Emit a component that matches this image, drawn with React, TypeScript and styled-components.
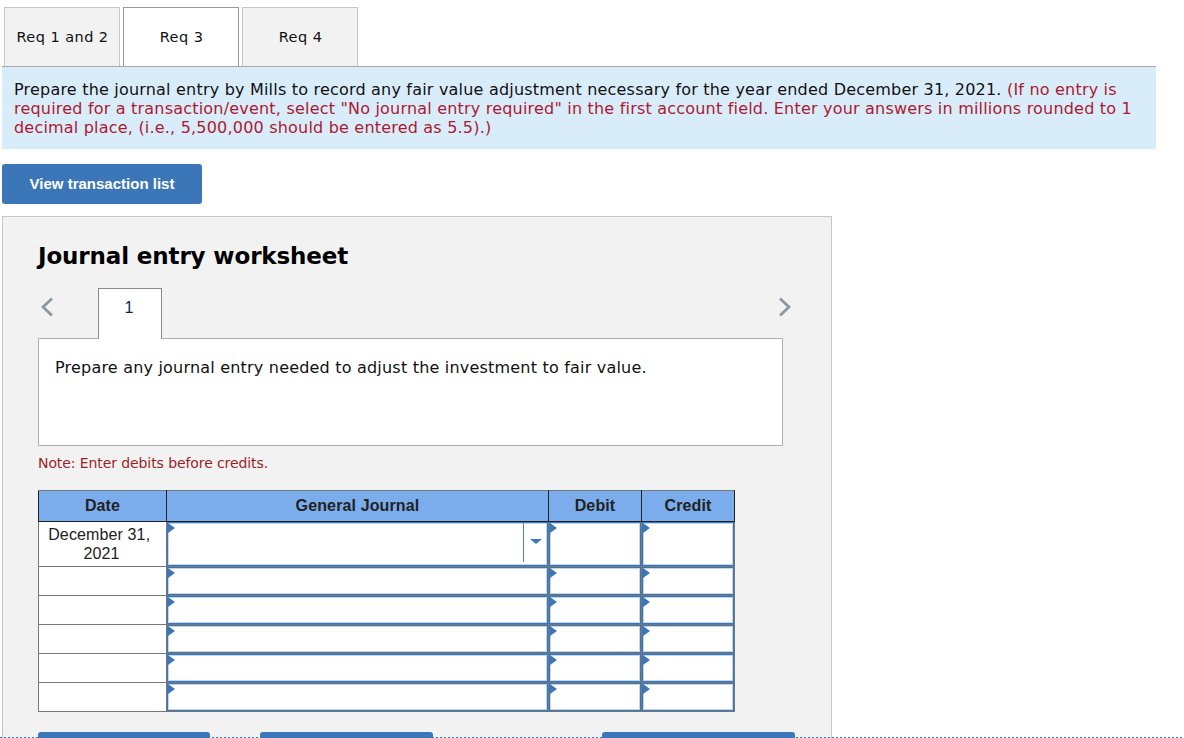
import React from "react";
import styled, { createGlobalStyle } from "styled-components";

const Global = createGlobalStyle`
  html, body { margin: 0; padding: 0; background: #fff; }
  body { font-family: "DejaVu Sans", Verdana, sans-serif; color: #111; overflow: hidden; }
`;

const Page = styled.div`
  position: relative;
  width: 1184px;
  height: 738px;
  overflow: hidden;
`;
const Content = styled.div`
  width: 1154px;
  padding: 7px 0 0 2px;
`;
const TabBar = styled.div`
  display: flex;
  gap: 3px;
  padding-left: 2px;
  height: 60px;
`;
const Tab = styled.div<{ $active?: boolean }>`
  width: 116px;
  box-sizing: border-box;
  height: 60px;
  display: flex;
  align-items: center;
  justify-content: center;
  padding: 0 0 2px 1px;
  font-size: 14.5px;
  letter-spacing: 0.45px;
  background: ${(p) => (p.$active ? "#fff" : "#f2f2f2")};
  border: 1px solid ${(p) => (p.$active ? "#999" : "#c6c6c6")};
  border-bottom: 0;
`;
const Instructions = styled.div`
  position: relative;
  box-sizing: border-box;
  height: 83px;
  margin-top: -1px;
  background: #d9ecfa;
  border-top: 1px solid #a8a8a8;
  padding: 13px 12px 0;
  font-size: 16px;
  line-height: 19px;
  letter-spacing: 0.2px;
`;
const Hint = styled.span`
  color: #ac1a2f;
`;
const ListButton = styled.button`
  display: block;
  width: 200px;
  height: 40px;
  margin: 15px 0 12px;
  padding: 0 6px 2px;
  border: 0;
  border-radius: 3px;
  background: #3b76b8;
  color: #fff;
  font: bold 15px "Liberation Sans", sans-serif;
`;
const Panel = styled.section`
  box-sizing: border-box;
  width: 830px;
  height: 560px;
  background: #f2f2f2;
  border: 1px solid #c6c6c6;
  padding: 23px 35px 0;
`;
const Heading = styled.h2`
  margin: 0;
  font-size: 23px;
  line-height: 32px;
  font-weight: bold;
  letter-spacing: -0.13px;
  color: #000;
`;
const Stepper = styled.div`
  display: flex;
  align-items: flex-start;
  width: 745px;
  height: 50px;
  margin-top: 16px;
`;
const Arrow = styled.svg`
  width: 14px;
  height: 20px;
  margin-top: 9px;
  margin-left: 2px;
  flex: none;
`;
const StepTab = styled.div`
  box-sizing: border-box;
  width: 64px;
  height: 51px;
  margin-left: 44px;
  margin-right: auto;
  background: #fff;
  border: 1px solid #8a8a8a;
  border-bottom: 0;
  position: relative;
  z-index: 1;
  padding: 9px 2px 0 0;
  text-align: center;
  font: 16px/19px "Liberation Sans", sans-serif;
  color: #0b1f63;
`;
const NextArrow = styled(Arrow)`
  margin-right: -9px;
`;
const Prompt = styled.div`
  box-sizing: border-box;
  width: 745px;
  height: 108px;
  background: #fff;
  border: 1px solid #b0b0b0;
  padding: 19px 16px 0;
  font-size: 16px;
  line-height: 19px;
  letter-spacing: 0.2px;
`;
const Note = styled.p`
  margin: 8px 0 18px;
  font-size: 14px;
  line-height: 18px;
  letter-spacing: -0.09px;
  color: #9c1f28;
`;
const Table = styled.table`
  width: 697px;
  border-collapse: collapse;
  table-layout: fixed;
  font-family: "Liberation Sans", Arial, sans-serif;
  font-size: 16px;
  letter-spacing: 0.13px;
`;
const Th = styled.th<{ $w: number }>`
  box-sizing: border-box;
  width: ${(p) => p.$w}px;
  height: 31px;
  padding: 0 0 1px;
  background: #7badec;
  border: 1px solid #222;
  border-top-color: #777;
  font-weight: bold;
  color: #222;
`;
const DateCell = styled.td`
  padding: 2px 6px 3px 4px;
  text-align: center;
  line-height: 19px;
  background: #fff;
  border: 1px solid #777;
  color: #222;
`;
const Row = styled.tr<{ $tall?: boolean }>`
  height: ${(p) => (p.$tall ? 45 : 29)}px;
`;
const EntryCell = styled.td`
  padding: 0;
  background: #fff;
  border: 1px solid #777;
  position: relative;
`;
const Field = styled.div`
  position: absolute;
  inset: 0;
  border: 1px solid #3b76b8;
  box-shadow: inset 0 0 0 1px #c4d6ec;
  background: #fff;
`;
const Marker = styled.span`
  position: absolute;
  left: 1px;
  top: 1px;
  width: 0;
  height: 0;
  border-left: 7px solid #3b76b8;
  border-top: 5px solid transparent;
  border-bottom: 5px solid transparent;
`;
const Picker = styled.div`
  position: absolute;
  top: 1px;
  right: 0;
  bottom: 4px;
  width: 24px;
  border-left: 1px solid #4d7fb9;
`;
const Caret = styled.span`
  position: absolute;
  left: 6px;
  top: 16px;
  width: 0;
  height: 0;
  border-top: 5px solid #3b76b8;
  border-left: 6px solid transparent;
  border-right: 6px solid transparent;
`;
const ActionRow = styled.div`
  display: flex;
  margin-top: 20px;
`;
const Action = styled.div<{ $w: number; $gap: number }>`
  width: ${(p) => p.$w}px;
  height: 30px;
  margin-left: ${(p) => p.$gap}px;
  background: #3b76b8;
  border-radius: 3px;
`;
const Dotted = styled.div`
  position: absolute;
  left: 0;
  right: 0;
  bottom: 0;
  height: 1px;
  background: repeating-linear-gradient(90deg, #3b76b8 0 2px, transparent 2px 4px);
`;

const Entry = ({ picker }: { picker?: boolean }) => (
  <EntryCell>
    <Field />
    <Marker />
    {picker && (
      <Picker>
        <Caret />
      </Picker>
    )}
  </EntryCell>
);

export default function App() {
  return (
    <Page>
      <Global />
      <Content>
        <TabBar>
          <Tab>Req 1 and 2</Tab>
          <Tab $active>Req 3</Tab>
          <Tab>Req 4</Tab>
        </TabBar>
        <Instructions>
          Prepare the journal entry by Mills to record any fair value adjustment necessary for the year ended December 31, 2021.{" "}
          <Hint>
            (If no entry is required for a transaction/event, select "No journal entry required" in the first account field. Enter your answers in millions rounded to 1 decimal place, (i.e., 5,500,000 should be entered as 5.5).)
          </Hint>
        </Instructions>
        <ListButton>View transaction list</ListButton>
        <Panel>
          <Heading>Journal entry worksheet</Heading>
          <Stepper>
            <Arrow viewBox="0 0 14 20">
              <path d="M12 1.5 L3 10 L12 18.5" fill="none" stroke="#8f979f" strokeWidth="2.8" />
            </Arrow>
            <StepTab>1</StepTab>
            <NextArrow viewBox="0 0 14 20">
              <path d="M2 1.5 L11 10 L2 18.5" fill="none" stroke="#8f979f" strokeWidth="2.8" />
            </NextArrow>
          </Stepper>
          <Prompt>Prepare any journal entry needed to adjust the investment to fair value.</Prompt>
          <Note>Note: Enter debits before credits.</Note>
          <Table>
            <thead>
              <tr>
                <Th $w={128}>Date</Th>
                <Th $w={382}>General Journal</Th>
                <Th $w={93}>Debit</Th>
                <Th $w={93}>Credit</Th>
              </tr>
            </thead>
            <tbody>
              <Row $tall>
                <DateCell>{"December 31,\u00a0 2021"}</DateCell>
                <Entry picker />
                <Entry />
                <Entry />
              </Row>
              {[0, 1, 2, 3, 4].map((i) => (
                <Row key={i}>
                  <DateCell />
                  <Entry />
                  <Entry />
                  <Entry />
                </Row>
              ))}
            </tbody>
          </Table>
          <ActionRow>
            <Action $w={172} $gap={0} />
            <Action $w={173} $gap={50} />
            <Action $w={193} $gap={169} />
          </ActionRow>
        </Panel>
      </Content>
      <Dotted />
    </Page>
  );
}
